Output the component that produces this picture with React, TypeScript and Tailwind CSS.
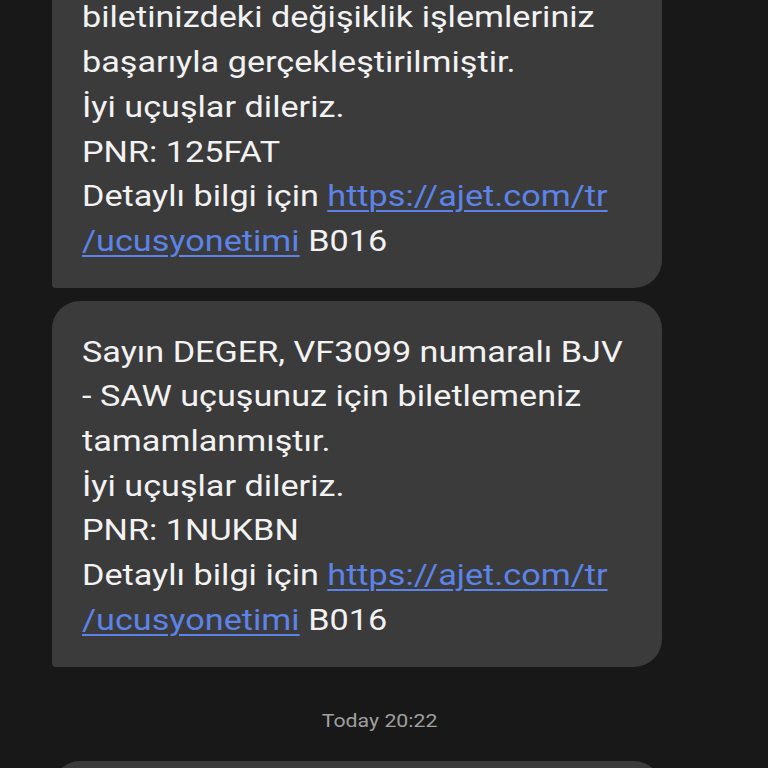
const Link = ({ children }: { children: React.ReactNode }) => (
    <a href="#" className="text-[#5b83e8] underline decoration-[1.5px] underline-offset-[4px]">
        {children}
    </a>
);

function Bubble({ lines, className = "" }: { lines: React.ReactNode[]; className?: string }) {
    return (
        <div
            className={`ml-[52px] w-[610px] rounded-[28px] rounded-bl-[4px] bg-[#3b3b3b] pl-[30px] pr-[20px] pt-[29px] pb-[24px] text-[30px] leading-[44.7px] text-[#f2f2f2] ${className}`}
        >
            {lines.map((line, i) => (
                <div key={i} className="origin-left scale-x-[1.14] whitespace-nowrap">
                    {line}
                </div>
            ))}
        </div>
    );
}

export default function App() {
    return (
        <div
            className="h-[768px] w-[768px] overflow-hidden bg-[#181818]"
            style={{ fontFamily: "Roboto, 'Noto Sans', sans-serif" }}
        >
            <div className="-mt-[123px] flex flex-col">
                <Bubble
                    lines={[
                        "Sayın DEGER, VF3099 numaralı BJV",
                        "- SAW uçuşunuz için",
                        "biletinizdeki değişiklik işlemleriniz",
                        "başarıyla gerçekleştirilmiştir.",
                        "İyi uçuşlar dileriz.",
                        "PNR: 125FAT",
                        <>
                            Detaylı bilgi için <Link>https://ajet.com/tr</Link>
                        </>,
                        <>
                            <Link>/ucusyonetimi</Link> B016
                        </>,
                    ]}
                />
                <Bubble
                    className="mt-[13px]"
                    lines={[
                        "Sayın DEGER, VF3099 numaralı BJV",
                        "- SAW uçuşunuz için biletlemeniz",
                        "tamamlanmıştır.",
                        "İyi uçuşlar dileriz.",
                        "PNR: 1NUKBN",
                        <>
                            Detaylı bilgi için <Link>https://ajet.com/tr</Link>
                        </>,
                        <>
                            <Link>/ucusyonetimi</Link> B016
                        </>,
                    ]}
                />
                <div className="flex h-[94px] items-center justify-center pt-[16px] pr-[8px] text-[19px] text-[#a0a0a0]">
                    <span className="scale-x-[1.12]">Today 20:22</span>
                </div>
                <div className="ml-[52px] h-[120px] w-[610px] rounded-[28px] bg-[#3b3b3b]" />
            </div>
        </div>
    );
}
